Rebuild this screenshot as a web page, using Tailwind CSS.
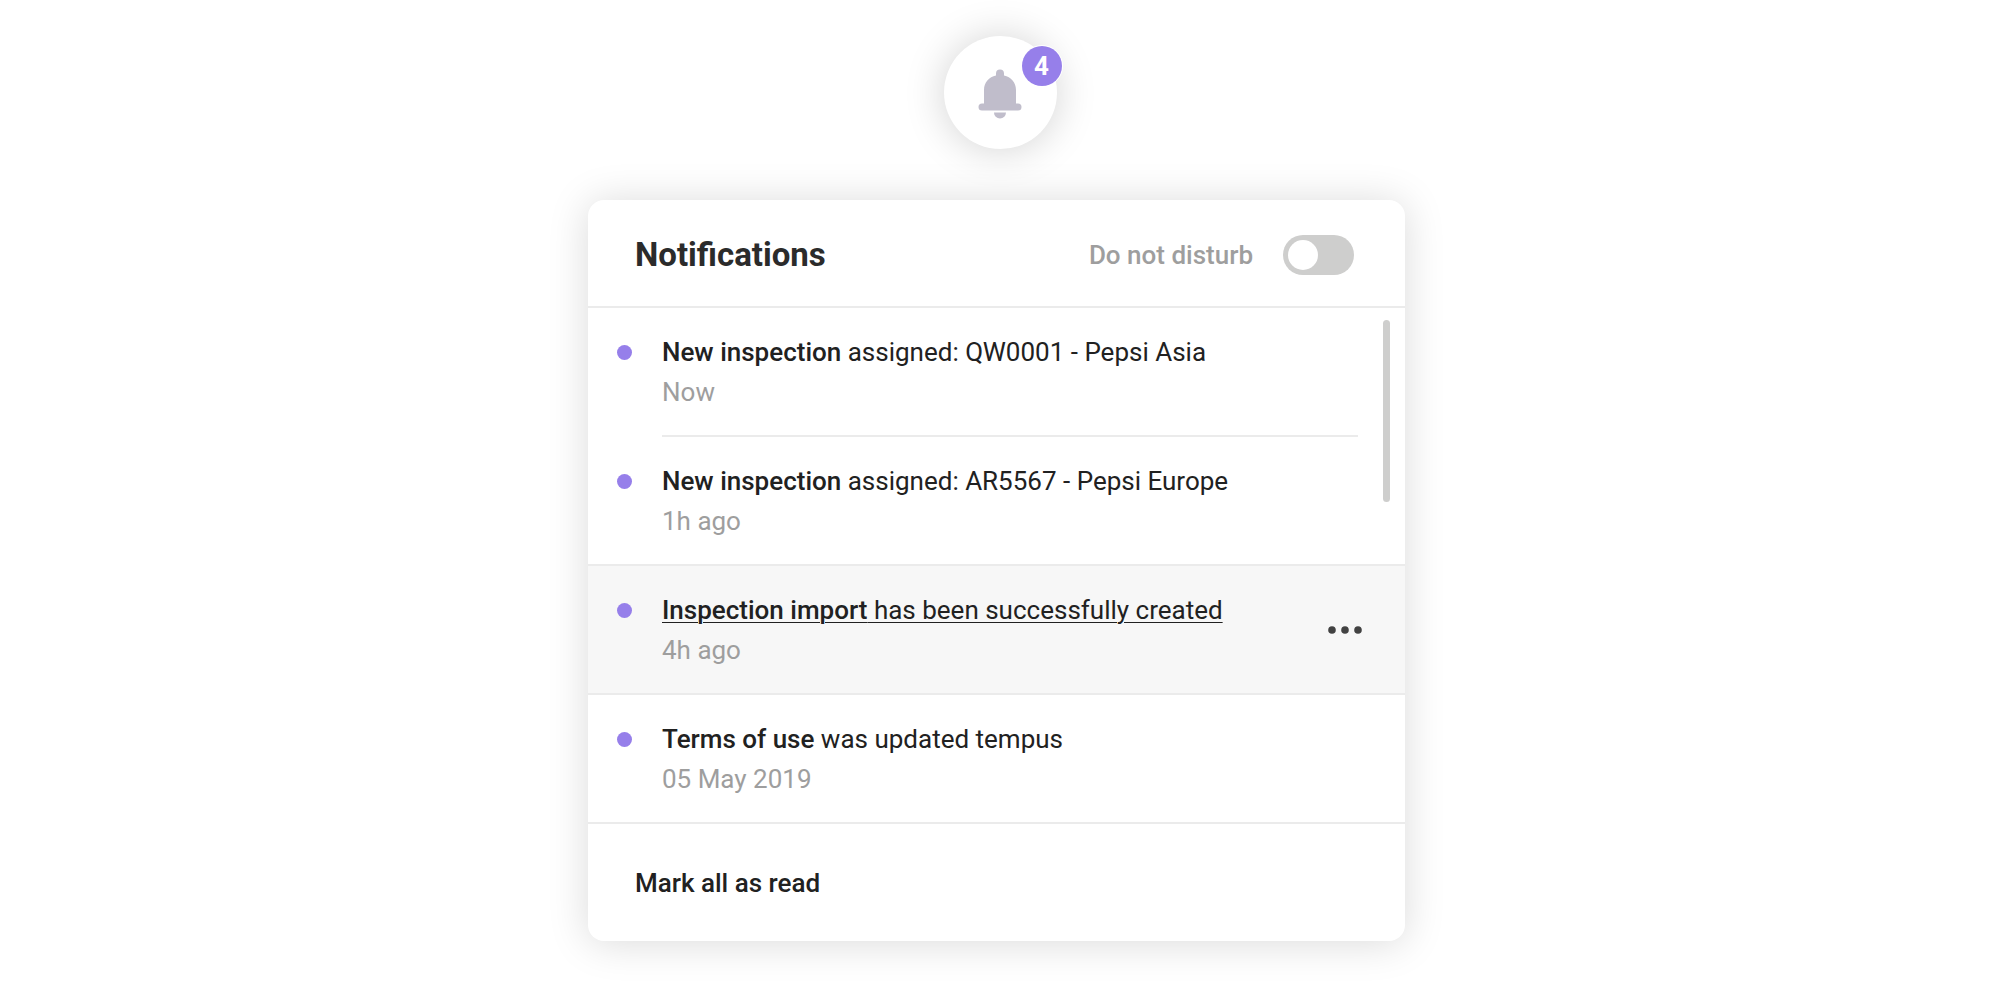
<!DOCTYPE html>
<html lang="en">
<head>
<meta charset="utf-8">
<meta name="viewport" content="width=device-width, initial-scale=1">
<title>Notifications</title>
<script src="https://cdn.jsdelivr.net/npm/@tailwindcss/browser@4"></script>
</head>
<body class="min-h-screen bg-white font-['Roboto',sans-serif] text-[26px] leading-10 text-[#212121] antialiased">
<main class="flex flex-col items-center pt-9 pb-12">
  <button type="button" aria-label="Notifications, 4 unread" class="relative grid size-[113px] place-items-center rounded-full bg-white shadow-[0_1px_40px_rgba(0,0,0,0.18)]">
    <svg class="mt-0.5 h-[50px] w-11" viewBox="0 0 44 50" fill="#c0bdcb" aria-hidden="true">
      <path d="M18 6.500V4.500a4 4 0 0 1 8 0V6.500C33 8 38 13.500 38 21V34.500H40a3.500 3.500 0 0 1 0 7H4a3.500 3.500 0 0 1 0-7H6V21C6 13.500 11 8 18 6.500Z"/>
      <path d="M16 43.500H28a6 6 0 0 1-12 0Z"/>
    </svg>
    <span class="absolute top-2.5 left-[78px] size-10 rounded-full bg-[#967fea] text-center font-bold text-white ring-1 ring-white">4</span>
  </button>

  <section aria-labelledby="title" class="mt-[51px] mr-[7px] w-full max-w-[817px] overflow-hidden rounded-2xl bg-white shadow-[0_2px_40px_rgba(0,0,0,0.15)]">
    <header class="flex items-center justify-between border-b-2 border-[#ebebeb] pt-[35px] pr-[51px] pb-[31px] pl-[47px]">
      <h1 id="title" class="text-[33px] font-bold text-[#2b2b2b]">Notifications</h1>
      <label class="flex items-center gap-[30px] font-medium text-[#9e9e9e]">
        Do not disturb
        <input type="checkbox" role="switch" class="h-10 w-[71px] appearance-none rounded-full bg-[#cececd] p-[5px] before:block before:size-[30px] before:rounded-full before:bg-white checked:before:ml-auto">
      </label>
    </header>

    <div class="relative">
      <ul>
        <li class="flex pr-[47px] pl-[29px]">
          <span class="mt-[37px] mr-[30px] size-[15px] shrink-0 rounded-full bg-[#967fea]"></span>
          <div class="flex-1 border-b-2 border-[#ebebeb] pt-6 pb-[23px]">
            <p><a href="#"><span class="font-medium">New inspection</span> assigned: QW0001 - Pepsi Asia</a></p>
            <time class="block text-[#9e9e9e]">Now</time>
          </div>
        </li>
        <li class="flex border-b-2 border-[#ebebeb] pr-[47px] pl-[29px]">
          <span class="mt-[37px] mr-[30px] size-[15px] shrink-0 rounded-full bg-[#967fea]"></span>
          <div class="flex-1 pt-6 pb-[23px]">
            <p><a href="#"><span class="font-medium">New inspection</span> assigned: AR5567 - Pepsi Europe</a></p>
            <time class="block text-[#9e9e9e]">1h ago</time>
          </div>
        </li>
        <li class="flex items-start border-b-2 border-[#ebebeb] bg-[#f7f7f7] pr-[43px] pl-[29px]">
          <span class="mt-[37px] mr-[30px] size-[15px] shrink-0 rounded-full bg-[#967fea]"></span>
          <div class="flex-1 pt-6 pb-[23px]">
            <p><a href="#" class="underline decoration-1 underline-offset-[3px]"><span class="font-medium">Inspection import</span> has been successfully created</a></p>
            <time class="block text-[#9e9e9e]">4h ago</time>
          </div>
          <button type="button" aria-label="More actions" class="self-center">
            <svg class="h-8 w-[34px]" viewBox="0 0 34 32" fill="#424242" aria-hidden="true">
              <circle cx="4" cy="16" r="3.800"/><circle cx="17" cy="16" r="3.800"/><circle cx="30" cy="16" r="3.800"/>
            </svg>
          </button>
        </li>
        <li class="flex border-b-2 border-[#ebebeb] pr-[47px] pl-[29px]">
          <span class="mt-[37px] mr-[30px] size-[15px] shrink-0 rounded-full bg-[#967fea]"></span>
          <div class="flex-1 pt-6 pb-[23px]">
            <p><a href="#"><span class="font-medium">Terms of use</span> was updated tempus</a></p>
            <time class="block text-[#9e9e9e]">05 May 2019</time>
          </div>
        </li>
      </ul>
      <!-- Scroll thumb over the list -->
      <div class="absolute top-3 right-[15px] h-[182px] w-[7px] rounded-full bg-[#cececd]"></div>
    </div>

    <footer class="px-[47px] pt-[39px] pb-[38px]">
      <button type="button" class="block font-medium">Mark all as read</button>
    </footer>
  </section>
</main>
</body>
</html>
